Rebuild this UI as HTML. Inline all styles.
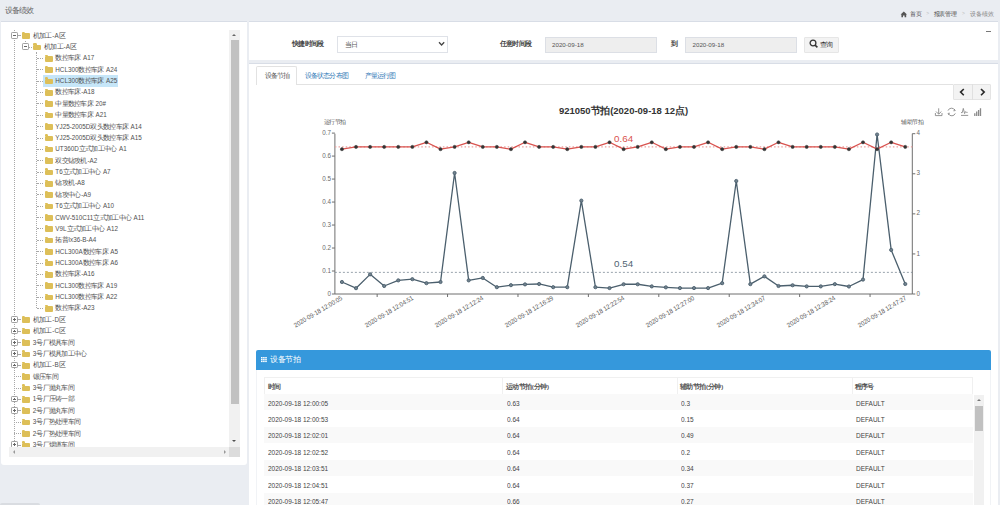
<!DOCTYPE html>
<html><head><meta charset="utf-8"><style>
*{box-sizing:border-box;margin:0;padding:0}
html,body{width:1000px;height:505px;overflow:hidden;background:#eaedf2;font-family:"Liberation Sans",sans-serif;color:#333}
.abs{position:absolute}
.t{position:absolute;white-space:nowrap;line-height:1}

.t.c{text-align:center}
.xl{font-size:6.6px;color:#555;transform-origin:100% 0;transform:rotate(-31deg) scaleX(0.9)}
.panel{position:absolute;background:#fff;border-top:1.5px solid #d8dde6}
.vl{position:absolute;width:0;border-left:1px dotted #a8a8a8}
.hl{position:absolute;height:0;border-top:1px dotted #a8a8a8}
.ex{position:absolute;width:6.6px;height:6.6px;border:1px solid #a0a0a0;border-radius:1.2px;background:#fff}
.ex .h{position:absolute;left:1px;top:1.9px;width:2.6px;height:0.8px;background:#666}
.ex .v{position:absolute;left:1.9px;top:1px;width:0.8px;height:2.6px;background:#666}
.fd{position:absolute;width:8px;height:5.6px;background:#ddbf58;border-radius:1px}
.fd:before{content:"";position:absolute;left:0;top:-1.2px;width:3.4px;height:1.6px;background:#ddbf58;border-radius:1px 1.4px 0 0}
.sel{position:absolute;background:#c6e6f8}
.sb{position:absolute;background:#f1f1f1}
.th{position:absolute;background:#c1c1c1}
.tri{position:absolute;width:0;height:0}
</style></head><body>
<div class="t" style="left:4.9px;top:6.8px;font-size:7px;color:#666"><span style="font-size:8px;letter-spacing:-1.00px;margin-right:1.00px">设备绩效</span></div>
<svg class="abs" style="left:900px;top:10.5px" width="8" height="7"><path d="M0.6 3.4 L3.8 0.6 L7 3.4 L6.2 3.4 L6.2 6.3 L4.6 6.3 L4.6 4.5 L3 4.5 L3 6.3 L1.4 6.3 L1.4 3.4 Z" fill="#555"/></svg>
<div class="t" style="left:910.30px;top:10.80px;font-size:6.00px;color:#444;"><span style="font-size:6px;letter-spacing:-0.30px;margin-right:0.30px">首页</span></div>
<div class="t" style="left:926.30px;top:11.00px;font-size:5.00px;color:#bbb;">&gt;</div>
<div class="t" style="left:933.70px;top:10.80px;font-size:6.00px;color:#444;"><span style="font-size:6px;letter-spacing:-0.30px;margin-right:0.30px">报表管理</span></div>
<div class="t" style="left:962.00px;top:11.00px;font-size:5.00px;color:#bbb;">&gt;</div>
<div class="t" style="left:970.40px;top:10.80px;font-size:6.00px;color:#888;"><span style="font-size:6px;letter-spacing:-0.20px;margin-right:0.20px">设备绩效</span></div>
<div class="panel" style="left:1px;top:20.5px;width:246px;height:444.5px;border-radius:0 0 3px 3px"></div>
<div class="abs" style="left:9px;top:30px;width:220.2px;height:417px;overflow:hidden">
<div class="abs" style="left:-9px;top:-30px;width:260px;height:500px">
<div class="vl" style="left:13.80px;top:29.50px;height:421.02px"></div>
<div class="vl" style="left:25.10px;top:40.57px;height:3.00px"></div>
<div class="vl" style="left:36.40px;top:51.94px;height:256.14px"></div>
<div class="ex" style="left:11.10px;top:32.00px"><i class="h"></i></div>
<div class="hl" style="left:17.60px;top:35.20px;width:2.70px"></div>
<div class="fd" style="left:22.00px;top:33.20px"></div>
<div class="t" style="left:32.70px;top:31.60px;font-size:6.30px;color:#505050;"><span style="font-size:7px;letter-spacing:-0.70px;margin-right:0.70px">机加工</span>-A<span style="font-size:7px;letter-spacing:-0.70px;margin-right:0.70px">区</span></div>
<div class="ex" style="left:22.40px;top:43.37px"><i class="h"></i></div>
<div class="hl" style="left:28.90px;top:46.57px;width:2.70px"></div>
<div class="fd" style="left:33.30px;top:44.57px"></div>
<div class="t" style="left:44.00px;top:42.97px;font-size:6.30px;color:#505050;"><span style="font-size:7px;letter-spacing:-0.70px;margin-right:0.70px">机加工</span>-A<span style="font-size:7px;letter-spacing:-0.70px;margin-right:0.70px">区</span></div>
<div class="hl" style="left:36.90px;top:57.94px;width:6.50px"></div>
<div class="fd" style="left:44.60px;top:55.94px"></div>
<div class="t" style="left:55.30px;top:54.34px;font-size:6.30px;color:#505050;"><span style="font-size:7px;letter-spacing:-0.70px;margin-right:0.70px">数控车床</span> A17</div>
<div class="hl" style="left:36.90px;top:69.31px;width:6.50px"></div>
<div class="fd" style="left:44.60px;top:67.31px"></div>
<div class="t" style="left:55.30px;top:65.71px;font-size:6.30px;color:#505050;">HCL300<span style="font-size:7px;letter-spacing:-0.70px;margin-right:0.70px">数控车床</span> A24</div>
<div class="sel" style="left:43.1px;top:75px;width:74.8px;height:11.7px"></div>
<div class="hl" style="left:36.90px;top:80.68px;width:6.50px"></div>
<div class="fd" style="left:44.60px;top:78.68px"></div>
<div class="t" style="left:55.30px;top:77.08px;font-size:6.30px;color:#505050;">HCL300<span style="font-size:7px;letter-spacing:-0.70px;margin-right:0.70px">数控车床</span> A25</div>
<div class="hl" style="left:36.90px;top:92.05px;width:6.50px"></div>
<div class="fd" style="left:44.60px;top:90.05px"></div>
<div class="t" style="left:55.30px;top:88.45px;font-size:6.30px;color:#505050;"><span style="font-size:7px;letter-spacing:-0.70px;margin-right:0.70px">数控车床</span>-A18</div>
<div class="hl" style="left:36.90px;top:103.42px;width:6.50px"></div>
<div class="fd" style="left:44.60px;top:101.42px"></div>
<div class="t" style="left:55.30px;top:99.82px;font-size:6.30px;color:#505050;"><span style="font-size:7px;letter-spacing:-0.70px;margin-right:0.70px">中量数控车床</span> 20#</div>
<div class="hl" style="left:36.90px;top:114.79px;width:6.50px"></div>
<div class="fd" style="left:44.60px;top:112.79px"></div>
<div class="t" style="left:55.30px;top:111.19px;font-size:6.30px;color:#505050;"><span style="font-size:7px;letter-spacing:-0.70px;margin-right:0.70px">中量数控车床</span> A21</div>
<div class="hl" style="left:36.90px;top:126.16px;width:6.50px"></div>
<div class="fd" style="left:44.60px;top:124.16px"></div>
<div class="t" style="left:55.30px;top:122.56px;font-size:6.30px;color:#505050;">YJ25-2005D<span style="font-size:7px;letter-spacing:-0.70px;margin-right:0.70px">双头数控车床</span> A14</div>
<div class="hl" style="left:36.90px;top:137.53px;width:6.50px"></div>
<div class="fd" style="left:44.60px;top:135.53px"></div>
<div class="t" style="left:55.30px;top:133.93px;font-size:6.30px;color:#505050;">YJ25-2005D<span style="font-size:7px;letter-spacing:-0.70px;margin-right:0.70px">双头数控车床</span> A15</div>
<div class="hl" style="left:36.90px;top:148.90px;width:6.50px"></div>
<div class="fd" style="left:44.60px;top:146.90px"></div>
<div class="t" style="left:55.30px;top:145.30px;font-size:6.30px;color:#505050;">UT360D<span style="font-size:7px;letter-spacing:-0.70px;margin-right:0.70px">立式加工中心</span> A1</div>
<div class="hl" style="left:36.90px;top:160.27px;width:6.50px"></div>
<div class="fd" style="left:44.60px;top:158.27px"></div>
<div class="t" style="left:55.30px;top:156.67px;font-size:6.30px;color:#505050;"><span style="font-size:7px;letter-spacing:-0.70px;margin-right:0.70px">双交钻攻机</span>-A2</div>
<div class="hl" style="left:36.90px;top:171.64px;width:6.50px"></div>
<div class="fd" style="left:44.60px;top:169.64px"></div>
<div class="t" style="left:55.30px;top:168.04px;font-size:6.30px;color:#505050;">T6<span style="font-size:7px;letter-spacing:-0.70px;margin-right:0.70px">立式加工中心</span> A7</div>
<div class="hl" style="left:36.90px;top:183.01px;width:6.50px"></div>
<div class="fd" style="left:44.60px;top:181.01px"></div>
<div class="t" style="left:55.30px;top:179.41px;font-size:6.30px;color:#505050;"><span style="font-size:7px;letter-spacing:-0.70px;margin-right:0.70px">钻攻机</span>-A8</div>
<div class="hl" style="left:36.90px;top:194.38px;width:6.50px"></div>
<div class="fd" style="left:44.60px;top:192.38px"></div>
<div class="t" style="left:55.30px;top:190.78px;font-size:6.30px;color:#505050;"><span style="font-size:7px;letter-spacing:-0.70px;margin-right:0.70px">钻攻中心</span>-A9</div>
<div class="hl" style="left:36.90px;top:205.75px;width:6.50px"></div>
<div class="fd" style="left:44.60px;top:203.75px"></div>
<div class="t" style="left:55.30px;top:202.15px;font-size:6.30px;color:#505050;">T6<span style="font-size:7px;letter-spacing:-0.70px;margin-right:0.70px">立式加工中心</span> A10</div>
<div class="hl" style="left:36.90px;top:217.12px;width:6.50px"></div>
<div class="fd" style="left:44.60px;top:215.12px"></div>
<div class="t" style="left:55.30px;top:213.52px;font-size:6.30px;color:#505050;">CWV-510C11<span style="font-size:7px;letter-spacing:-0.70px;margin-right:0.70px">立式加工中心</span> A11</div>
<div class="hl" style="left:36.90px;top:228.49px;width:6.50px"></div>
<div class="fd" style="left:44.60px;top:226.49px"></div>
<div class="t" style="left:55.30px;top:224.89px;font-size:6.30px;color:#505050;">V9L<span style="font-size:7px;letter-spacing:-0.70px;margin-right:0.70px">立式加工中心</span> A12</div>
<div class="hl" style="left:36.90px;top:239.86px;width:6.50px"></div>
<div class="fd" style="left:44.60px;top:237.86px"></div>
<div class="t" style="left:55.30px;top:236.26px;font-size:6.30px;color:#505050;"><span style="font-size:7px;letter-spacing:-0.70px;margin-right:0.70px">拓普</span>lx36-B-A4</div>
<div class="hl" style="left:36.90px;top:251.23px;width:6.50px"></div>
<div class="fd" style="left:44.60px;top:249.23px"></div>
<div class="t" style="left:55.30px;top:247.63px;font-size:6.30px;color:#505050;">HCL300A<span style="font-size:7px;letter-spacing:-0.70px;margin-right:0.70px">数控车床</span> A5</div>
<div class="hl" style="left:36.90px;top:262.60px;width:6.50px"></div>
<div class="fd" style="left:44.60px;top:260.60px"></div>
<div class="t" style="left:55.30px;top:259.00px;font-size:6.30px;color:#505050;">HCL300A<span style="font-size:7px;letter-spacing:-0.70px;margin-right:0.70px">数控车床</span> A6</div>
<div class="hl" style="left:36.90px;top:273.97px;width:6.50px"></div>
<div class="fd" style="left:44.60px;top:271.97px"></div>
<div class="t" style="left:55.30px;top:270.37px;font-size:6.30px;color:#505050;"><span style="font-size:7px;letter-spacing:-0.70px;margin-right:0.70px">数控车床</span>-A16</div>
<div class="hl" style="left:36.90px;top:285.34px;width:6.50px"></div>
<div class="fd" style="left:44.60px;top:283.34px"></div>
<div class="t" style="left:55.30px;top:281.74px;font-size:6.30px;color:#505050;">HCL300<span style="font-size:7px;letter-spacing:-0.70px;margin-right:0.70px">数控车床</span> A19</div>
<div class="hl" style="left:36.90px;top:296.71px;width:6.50px"></div>
<div class="fd" style="left:44.60px;top:294.71px"></div>
<div class="t" style="left:55.30px;top:293.11px;font-size:6.30px;color:#505050;">HCL300<span style="font-size:7px;letter-spacing:-0.70px;margin-right:0.70px">数控车床</span> A22</div>
<div class="hl" style="left:36.90px;top:308.08px;width:6.50px"></div>
<div class="fd" style="left:44.60px;top:306.08px"></div>
<div class="t" style="left:55.30px;top:304.48px;font-size:6.30px;color:#505050;"><span style="font-size:7px;letter-spacing:-0.70px;margin-right:0.70px">数控车床</span>-A23</div>
<div class="ex" style="left:11.10px;top:316.25px"><i class="h"></i><i class=v></i></div>
<div class="hl" style="left:17.60px;top:319.45px;width:2.70px"></div>
<div class="fd" style="left:22.00px;top:317.45px"></div>
<div class="t" style="left:32.70px;top:315.85px;font-size:6.30px;color:#505050;"><span style="font-size:7px;letter-spacing:-0.70px;margin-right:0.70px">机加工</span>-D<span style="font-size:7px;letter-spacing:-0.70px;margin-right:0.70px">区</span></div>
<div class="ex" style="left:11.10px;top:327.62px"><i class="h"></i><i class=v></i></div>
<div class="hl" style="left:17.60px;top:330.82px;width:2.70px"></div>
<div class="fd" style="left:22.00px;top:328.82px"></div>
<div class="t" style="left:32.70px;top:327.22px;font-size:6.30px;color:#505050;"><span style="font-size:7px;letter-spacing:-0.70px;margin-right:0.70px">机加工</span>-C<span style="font-size:7px;letter-spacing:-0.70px;margin-right:0.70px">区</span></div>
<div class="ex" style="left:11.10px;top:338.99px"><i class="h"></i><i class=v></i></div>
<div class="hl" style="left:17.60px;top:342.19px;width:2.70px"></div>
<div class="fd" style="left:22.00px;top:340.19px"></div>
<div class="t" style="left:32.70px;top:338.59px;font-size:6.30px;color:#505050;">3<span style="font-size:7px;letter-spacing:-0.70px;margin-right:0.70px">号厂模具车间</span></div>
<div class="ex" style="left:11.10px;top:350.36px"><i class="h"></i><i class=v></i></div>
<div class="hl" style="left:17.60px;top:353.56px;width:2.70px"></div>
<div class="fd" style="left:22.00px;top:351.56px"></div>
<div class="t" style="left:32.70px;top:349.96px;font-size:6.30px;color:#505050;">3<span style="font-size:7px;letter-spacing:-0.70px;margin-right:0.70px">号厂模具加工中心</span></div>
<div class="ex" style="left:11.10px;top:361.73px"><i class="h"></i><i class=v></i></div>
<div class="hl" style="left:17.60px;top:364.93px;width:2.70px"></div>
<div class="fd" style="left:22.00px;top:362.93px"></div>
<div class="t" style="left:32.70px;top:361.33px;font-size:6.30px;color:#505050;"><span style="font-size:7px;letter-spacing:-0.70px;margin-right:0.70px">机加工</span>-B<span style="font-size:7px;letter-spacing:-0.70px;margin-right:0.70px">区</span></div>
<div class="hl" style="left:14.30px;top:376.30px;width:6.50px"></div>
<div class="fd" style="left:22.00px;top:374.30px"></div>
<div class="t" style="left:32.70px;top:372.70px;font-size:6.30px;color:#505050;"><span style="font-size:7px;letter-spacing:-0.70px;margin-right:0.70px">锻压车间</span></div>
<div class="hl" style="left:14.30px;top:387.67px;width:6.50px"></div>
<div class="fd" style="left:22.00px;top:385.67px"></div>
<div class="t" style="left:32.70px;top:384.07px;font-size:6.30px;color:#505050;">3<span style="font-size:7px;letter-spacing:-0.70px;margin-right:0.70px">号厂抛丸车间</span></div>
<div class="ex" style="left:11.10px;top:395.84px"><i class="h"></i><i class=v></i></div>
<div class="hl" style="left:17.60px;top:399.04px;width:2.70px"></div>
<div class="fd" style="left:22.00px;top:397.04px"></div>
<div class="t" style="left:32.70px;top:395.44px;font-size:6.30px;color:#505050;">1<span style="font-size:7px;letter-spacing:-0.70px;margin-right:0.70px">号厂压铸一部</span></div>
<div class="ex" style="left:11.10px;top:407.21px"><i class="h"></i><i class=v></i></div>
<div class="hl" style="left:17.60px;top:410.41px;width:2.70px"></div>
<div class="fd" style="left:22.00px;top:408.41px"></div>
<div class="t" style="left:32.70px;top:406.81px;font-size:6.30px;color:#505050;">2<span style="font-size:7px;letter-spacing:-0.70px;margin-right:0.70px">号厂抛丸车间</span></div>
<div class="hl" style="left:14.30px;top:421.78px;width:6.50px"></div>
<div class="fd" style="left:22.00px;top:419.78px"></div>
<div class="t" style="left:32.70px;top:418.18px;font-size:6.30px;color:#505050;">3<span style="font-size:7px;letter-spacing:-0.70px;margin-right:0.70px">号厂热处理车间</span></div>
<div class="hl" style="left:14.30px;top:433.15px;width:6.50px"></div>
<div class="fd" style="left:22.00px;top:431.15px"></div>
<div class="t" style="left:32.70px;top:429.55px;font-size:6.30px;color:#505050;">2<span style="font-size:7px;letter-spacing:-0.70px;margin-right:0.70px">号厂热处理车间</span></div>
<div class="ex" style="left:11.10px;top:441.32px"><i class="h"></i><i class=v></i></div>
<div class="hl" style="left:17.60px;top:444.52px;width:2.70px"></div>
<div class="fd" style="left:22.00px;top:442.52px"></div>
<div class="t" style="left:32.70px;top:440.92px;font-size:6.30px;color:#505050;">3<span style="font-size:7px;letter-spacing:-0.70px;margin-right:0.70px">号厂烟道车间</span></div>
</div></div>
<div class="sb" style="left:229.2px;top:30px;width:10.6px;height:417px"></div>
<div class="th" style="left:230.5px;top:40px;width:8px;height:363.7px"></div>
<div class="tri" style="left:232.4px;top:33.6px;border-left:2.3px solid transparent;border-right:2.3px solid transparent;border-bottom:2.3px solid #666"></div>
<div class="tri" style="left:232.4px;top:440px;border-left:2.3px solid transparent;border-right:2.3px solid transparent;border-top:2.3px solid #505050"></div>
<div class="sb" style="left:9px;top:447px;width:220.2px;height:10.4px"></div>
<div class="sb" style="left:229.2px;top:447px;width:10.6px;height:10.4px;background:#dcdcdc"></div>
<div class="tri" style="left:13px;top:449.9px;border-top:2.2px solid transparent;border-bottom:2.2px solid transparent;border-right:2.2px solid #999"></div>
<div class="tri" style="left:223.5px;top:449.9px;border-top:2.2px solid transparent;border-bottom:2.2px solid transparent;border-left:2.2px solid #999"></div>
<div class="abs" style="left:0;top:503px;width:40px;height:2px;background:#d9dce1;border-radius:2px 2px 0 0"></div>

<div class="panel" style="left:249px;top:20.5px;width:749px;height:39.5px"></div>
<div class="abs" style="left:986px;top:31px;width:5px;height:1px;background:#777"></div>
<div class="t" style="left:292.20px;top:39.50px;font-size:6.20px;color:#444;font-weight:bold"><span style="font-size:7px;letter-spacing:-0.80px;margin-right:0.80px">快捷时间段</span></div>
<div class="abs" style="left:337px;top:36.2px;width:111px;height:16.6px;border:1px solid #dfe2e8;background:#fff"></div>
<div class="t" style="left:345.00px;top:41.30px;font-size:6.00px;color:#555;"><span style="font-size:7px;letter-spacing:-1.00px;margin-right:1.00px">当日</span></div>
<svg class="abs" style="left:438px;top:41px" width="8" height="6"><path d="M1 1.3 L3.6 4 L6.2 1.3" fill="none" stroke="#444" stroke-width="1.3"/></svg>
<div class="t" style="left:500.00px;top:39.50px;font-size:6.20px;color:#444;font-weight:bold"><span style="font-size:7px;letter-spacing:-0.80px;margin-right:0.80px">任意时间段</span></div>
<div class="abs" style="left:545.4px;top:36.6px;width:111.6px;height:16px;border:1px solid #dcdfe5;background:#eeeeee"></div>
<div class="t" style="left:552.00px;top:41.60px;font-size:6.20px;color:#555;">2020-09-18</div>
<div class="t" style="left:671.00px;top:39.50px;font-size:6.20px;color:#444;font-weight:bold"><span style="font-size:7px;letter-spacing:-0.80px;margin-right:0.80px">到</span></div>
<div class="abs" style="left:685.4px;top:36.6px;width:111.6px;height:16.2px;border:1px solid #dcdfe5;background:#eeeeee"></div>
<div class="t" style="left:692.50px;top:41.60px;font-size:6.20px;color:#555;">2020-09-18</div>
<div class="abs" style="left:804px;top:37px;width:34.7px;height:15.6px;border:1px solid #e6e6e6;background:#f3f3f3;border-radius:1px"></div>
<svg class="abs" style="left:809px;top:39px" width="10" height="10"><circle cx="4" cy="4" r="2.9" fill="none" stroke="#333" stroke-width="1.3"/><path d="M6.1 6.1 L8.4 8.4" stroke="#333" stroke-width="1.5"/></svg>
<div class="t" style="left:820.00px;top:41.20px;font-size:6.30px;color:#333;"><span style="font-size:7px;letter-spacing:-0.70px;margin-right:0.70px">查询</span></div>

<div class="panel" style="left:249px;top:62.5px;width:749px;height:443px"></div>
<div class="abs" style="left:256px;top:83.6px;width:697px;height:1px;background:#e2e2e2"></div>
<div class="abs" style="left:256.4px;top:65.7px;width:40.4px;height:19px;border:1px solid #e2e2e2;border-bottom:0;background:#fff;border-radius:2px 2px 0 0"></div>
<div class="t" style="left:265.00px;top:72.20px;font-size:6.10px;color:#555;"><span style="font-size:7px;letter-spacing:-0.90px;margin-right:0.90px">设备节拍</span></div>
<div class="t" style="left:305.00px;top:72.20px;font-size:6.10px;color:#337ab7;"><span style="font-size:7px;letter-spacing:-0.90px;margin-right:0.90px">设备状态分布图</span></div>
<div class="t" style="left:365.00px;top:72.20px;font-size:6.10px;color:#337ab7;"><span style="font-size:7px;letter-spacing:-0.90px;margin-right:0.90px">产量运行图</span></div>
<div class="abs" style="left:953.2px;top:84.4px;width:37.4px;height:16px;border:1px solid #e4e4e4;background:#f3f3f3;border-radius:1px"></div>
<div class="abs" style="left:971.7px;top:84.4px;width:1px;height:16px;background:#e0e0e0"></div>
<svg class="abs" style="left:955px;top:86px" width="36" height="12"><path d="M8.8 3 L5.6 6.1 L8.8 9.2" fill="none" stroke="#2a2a2a" stroke-width="1.6"/><path d="M26 3 L29.2 6.1 L26 9.2" fill="none" stroke="#2a2a2a" stroke-width="1.6"/></svg>

<svg class="abs" style="left:0;top:0" width="1000" height="505">
<line x1="334.9" y1="133.7" x2="334.9" y2="294.0" stroke="#6e6e6e" stroke-width="1"/>
<line x1="912.3" y1="133.7" x2="912.3" y2="294.0" stroke="#6e6e6e" stroke-width="1"/>
<line x1="334.9" y1="294.0" x2="912.3" y2="294.0" stroke="#6e6e6e" stroke-width="1"/>
<line x1="331.9" y1="294.00" x2="334.9" y2="294.00" stroke="#6e6e6e"/>
<line x1="331.9" y1="271.01" x2="334.9" y2="271.01" stroke="#6e6e6e"/>
<line x1="331.9" y1="248.03" x2="334.9" y2="248.03" stroke="#6e6e6e"/>
<line x1="331.9" y1="225.04" x2="334.9" y2="225.04" stroke="#6e6e6e"/>
<line x1="331.9" y1="202.06" x2="334.9" y2="202.06" stroke="#6e6e6e"/>
<line x1="331.9" y1="179.07" x2="334.9" y2="179.07" stroke="#6e6e6e"/>
<line x1="331.9" y1="156.09" x2="334.9" y2="156.09" stroke="#6e6e6e"/>
<line x1="331.9" y1="133.10" x2="334.9" y2="133.10" stroke="#6e6e6e"/>
<line x1="912.3" y1="294.00" x2="915.3" y2="294.00" stroke="#6e6e6e"/>
<line x1="912.3" y1="253.93" x2="915.3" y2="253.93" stroke="#6e6e6e"/>
<line x1="912.3" y1="213.85" x2="915.3" y2="213.85" stroke="#6e6e6e"/>
<line x1="912.3" y1="173.77" x2="915.3" y2="173.77" stroke="#6e6e6e"/>
<line x1="912.3" y1="133.70" x2="915.3" y2="133.70" stroke="#6e6e6e"/>
<line x1="377.15" y1="294.0" x2="377.15" y2="297.0" stroke="#6e6e6e"/>
<line x1="447.56" y1="294.0" x2="447.56" y2="297.0" stroke="#6e6e6e"/>
<line x1="517.98" y1="294.0" x2="517.98" y2="297.0" stroke="#6e6e6e"/>
<line x1="588.39" y1="294.0" x2="588.39" y2="297.0" stroke="#6e6e6e"/>
<line x1="658.81" y1="294.0" x2="658.81" y2="297.0" stroke="#6e6e6e"/>
<line x1="729.22" y1="294.0" x2="729.22" y2="297.0" stroke="#6e6e6e"/>
<line x1="799.64" y1="294.0" x2="799.64" y2="297.0" stroke="#6e6e6e"/>
<line x1="870.05" y1="294.0" x2="870.05" y2="297.0" stroke="#6e6e6e"/>
<line x1="334.9" y1="146.89" x2="912.3" y2="146.89" stroke="#eba3a1" stroke-width="1.3" stroke-dasharray="1.5 2.1"/>
<line x1="334.9" y1="272.36" x2="912.3" y2="272.36" stroke="#7d8c97" stroke-width="0.8" stroke-dasharray="2 2"/>
<polyline points="341.94,281.98 356.02,288.19 370.11,274.36 384.19,285.99 398.27,280.37 412.36,279.17 426.44,283.18 440.52,281.98 454.60,172.97 468.69,280.37 482.77,277.97 496.85,287.19 510.94,285.18 525.02,284.38 539.10,283.98 553.19,287.19 567.27,287.19 581.35,200.63 595.43,287.19 609.52,288.07 623.60,284.26 637.68,284.26 651.77,286.39 665.85,287.35 679.93,288.07 694.01,288.07 708.10,288.07 722.18,283.18 736.26,180.99 750.35,284.14 764.43,276.37 778.51,285.99 792.60,285.26 806.68,286.39 820.76,286.39 834.84,284.14 848.93,286.51 863.01,279.57 877.09,134.50 891.18,249.92 905.26,283.98" fill="none" stroke="#4b5f6d" stroke-width="1.3" stroke-linejoin="round"/>
<circle cx="341.94" cy="281.98" r="1.6" fill="#71828e" stroke="#4b5f6d" stroke-width="0.9"/>
<circle cx="356.02" cy="288.19" r="1.6" fill="#71828e" stroke="#4b5f6d" stroke-width="0.9"/>
<circle cx="370.11" cy="274.36" r="1.6" fill="#71828e" stroke="#4b5f6d" stroke-width="0.9"/>
<circle cx="384.19" cy="285.99" r="1.6" fill="#71828e" stroke="#4b5f6d" stroke-width="0.9"/>
<circle cx="398.27" cy="280.37" r="1.6" fill="#71828e" stroke="#4b5f6d" stroke-width="0.9"/>
<circle cx="412.36" cy="279.17" r="1.6" fill="#71828e" stroke="#4b5f6d" stroke-width="0.9"/>
<circle cx="426.44" cy="283.18" r="1.6" fill="#71828e" stroke="#4b5f6d" stroke-width="0.9"/>
<circle cx="440.52" cy="281.98" r="1.6" fill="#71828e" stroke="#4b5f6d" stroke-width="0.9"/>
<circle cx="454.60" cy="172.97" r="1.6" fill="#71828e" stroke="#4b5f6d" stroke-width="0.9"/>
<circle cx="468.69" cy="280.37" r="1.6" fill="#71828e" stroke="#4b5f6d" stroke-width="0.9"/>
<circle cx="482.77" cy="277.97" r="1.6" fill="#71828e" stroke="#4b5f6d" stroke-width="0.9"/>
<circle cx="496.85" cy="287.19" r="1.6" fill="#71828e" stroke="#4b5f6d" stroke-width="0.9"/>
<circle cx="510.94" cy="285.18" r="1.6" fill="#71828e" stroke="#4b5f6d" stroke-width="0.9"/>
<circle cx="525.02" cy="284.38" r="1.6" fill="#71828e" stroke="#4b5f6d" stroke-width="0.9"/>
<circle cx="539.10" cy="283.98" r="1.6" fill="#71828e" stroke="#4b5f6d" stroke-width="0.9"/>
<circle cx="553.19" cy="287.19" r="1.6" fill="#71828e" stroke="#4b5f6d" stroke-width="0.9"/>
<circle cx="567.27" cy="287.19" r="1.6" fill="#71828e" stroke="#4b5f6d" stroke-width="0.9"/>
<circle cx="581.35" cy="200.63" r="1.6" fill="#71828e" stroke="#4b5f6d" stroke-width="0.9"/>
<circle cx="595.43" cy="287.19" r="1.6" fill="#71828e" stroke="#4b5f6d" stroke-width="0.9"/>
<circle cx="609.52" cy="288.07" r="1.6" fill="#71828e" stroke="#4b5f6d" stroke-width="0.9"/>
<circle cx="623.60" cy="284.26" r="1.6" fill="#71828e" stroke="#4b5f6d" stroke-width="0.9"/>
<circle cx="637.68" cy="284.26" r="1.6" fill="#71828e" stroke="#4b5f6d" stroke-width="0.9"/>
<circle cx="651.77" cy="286.39" r="1.6" fill="#71828e" stroke="#4b5f6d" stroke-width="0.9"/>
<circle cx="665.85" cy="287.35" r="1.6" fill="#71828e" stroke="#4b5f6d" stroke-width="0.9"/>
<circle cx="679.93" cy="288.07" r="1.6" fill="#71828e" stroke="#4b5f6d" stroke-width="0.9"/>
<circle cx="694.01" cy="288.07" r="1.6" fill="#71828e" stroke="#4b5f6d" stroke-width="0.9"/>
<circle cx="708.10" cy="288.07" r="1.6" fill="#71828e" stroke="#4b5f6d" stroke-width="0.9"/>
<circle cx="722.18" cy="283.18" r="1.6" fill="#71828e" stroke="#4b5f6d" stroke-width="0.9"/>
<circle cx="736.26" cy="180.99" r="1.6" fill="#71828e" stroke="#4b5f6d" stroke-width="0.9"/>
<circle cx="750.35" cy="284.14" r="1.6" fill="#71828e" stroke="#4b5f6d" stroke-width="0.9"/>
<circle cx="764.43" cy="276.37" r="1.6" fill="#71828e" stroke="#4b5f6d" stroke-width="0.9"/>
<circle cx="778.51" cy="285.99" r="1.6" fill="#71828e" stroke="#4b5f6d" stroke-width="0.9"/>
<circle cx="792.60" cy="285.26" r="1.6" fill="#71828e" stroke="#4b5f6d" stroke-width="0.9"/>
<circle cx="806.68" cy="286.39" r="1.6" fill="#71828e" stroke="#4b5f6d" stroke-width="0.9"/>
<circle cx="820.76" cy="286.39" r="1.6" fill="#71828e" stroke="#4b5f6d" stroke-width="0.9"/>
<circle cx="834.84" cy="284.14" r="1.6" fill="#71828e" stroke="#4b5f6d" stroke-width="0.9"/>
<circle cx="848.93" cy="286.51" r="1.6" fill="#71828e" stroke="#4b5f6d" stroke-width="0.9"/>
<circle cx="863.01" cy="279.57" r="1.6" fill="#71828e" stroke="#4b5f6d" stroke-width="0.9"/>
<circle cx="877.09" cy="134.50" r="1.6" fill="#71828e" stroke="#4b5f6d" stroke-width="0.9"/>
<circle cx="891.18" cy="249.92" r="1.6" fill="#71828e" stroke="#4b5f6d" stroke-width="0.9"/>
<circle cx="905.26" cy="283.98" r="1.6" fill="#71828e" stroke="#4b5f6d" stroke-width="0.9"/>
<polyline points="341.94,149.19 356.02,146.89 370.11,146.89 384.19,146.89 398.27,146.89 412.36,146.89 426.44,142.29 440.52,149.19 454.60,146.89 468.69,142.29 482.77,146.89 496.85,146.89 510.94,149.19 525.02,142.29 539.10,146.89 553.19,146.89 567.27,149.19 581.35,146.89 595.43,146.89 609.52,142.29 623.60,149.19 637.68,146.89 651.77,142.29 665.85,149.19 679.93,146.89 694.01,146.89 708.10,142.29 722.18,149.19 736.26,146.89 750.35,146.89 764.43,149.19 778.51,142.29 792.60,146.89 806.68,146.89 820.76,146.89 834.84,146.89 848.93,149.19 863.01,142.29 877.09,149.19 891.18,142.29 905.26,146.89" fill="none" stroke="#d9534f" stroke-width="1.3" stroke-linejoin="round"/>
<circle cx="341.94" cy="149.19" r="1.6" fill="#333" stroke="#3a3a3a" stroke-width="0.5"/>
<circle cx="356.02" cy="146.89" r="1.6" fill="#333" stroke="#3a3a3a" stroke-width="0.5"/>
<circle cx="370.11" cy="146.89" r="1.6" fill="#333" stroke="#3a3a3a" stroke-width="0.5"/>
<circle cx="384.19" cy="146.89" r="1.6" fill="#333" stroke="#3a3a3a" stroke-width="0.5"/>
<circle cx="398.27" cy="146.89" r="1.6" fill="#333" stroke="#3a3a3a" stroke-width="0.5"/>
<circle cx="412.36" cy="146.89" r="1.6" fill="#333" stroke="#3a3a3a" stroke-width="0.5"/>
<circle cx="426.44" cy="142.29" r="1.6" fill="#333" stroke="#3a3a3a" stroke-width="0.5"/>
<circle cx="440.52" cy="149.19" r="1.6" fill="#333" stroke="#3a3a3a" stroke-width="0.5"/>
<circle cx="454.60" cy="146.89" r="1.6" fill="#333" stroke="#3a3a3a" stroke-width="0.5"/>
<circle cx="468.69" cy="142.29" r="1.6" fill="#333" stroke="#3a3a3a" stroke-width="0.5"/>
<circle cx="482.77" cy="146.89" r="1.6" fill="#333" stroke="#3a3a3a" stroke-width="0.5"/>
<circle cx="496.85" cy="146.89" r="1.6" fill="#333" stroke="#3a3a3a" stroke-width="0.5"/>
<circle cx="510.94" cy="149.19" r="1.6" fill="#333" stroke="#3a3a3a" stroke-width="0.5"/>
<circle cx="525.02" cy="142.29" r="1.6" fill="#333" stroke="#3a3a3a" stroke-width="0.5"/>
<circle cx="539.10" cy="146.89" r="1.6" fill="#333" stroke="#3a3a3a" stroke-width="0.5"/>
<circle cx="553.19" cy="146.89" r="1.6" fill="#333" stroke="#3a3a3a" stroke-width="0.5"/>
<circle cx="567.27" cy="149.19" r="1.6" fill="#333" stroke="#3a3a3a" stroke-width="0.5"/>
<circle cx="581.35" cy="146.89" r="1.6" fill="#333" stroke="#3a3a3a" stroke-width="0.5"/>
<circle cx="595.43" cy="146.89" r="1.6" fill="#333" stroke="#3a3a3a" stroke-width="0.5"/>
<circle cx="609.52" cy="142.29" r="1.6" fill="#333" stroke="#3a3a3a" stroke-width="0.5"/>
<circle cx="623.60" cy="149.19" r="1.6" fill="#333" stroke="#3a3a3a" stroke-width="0.5"/>
<circle cx="637.68" cy="146.89" r="1.6" fill="#333" stroke="#3a3a3a" stroke-width="0.5"/>
<circle cx="651.77" cy="142.29" r="1.6" fill="#333" stroke="#3a3a3a" stroke-width="0.5"/>
<circle cx="665.85" cy="149.19" r="1.6" fill="#333" stroke="#3a3a3a" stroke-width="0.5"/>
<circle cx="679.93" cy="146.89" r="1.6" fill="#333" stroke="#3a3a3a" stroke-width="0.5"/>
<circle cx="694.01" cy="146.89" r="1.6" fill="#333" stroke="#3a3a3a" stroke-width="0.5"/>
<circle cx="708.10" cy="142.29" r="1.6" fill="#333" stroke="#3a3a3a" stroke-width="0.5"/>
<circle cx="722.18" cy="149.19" r="1.6" fill="#333" stroke="#3a3a3a" stroke-width="0.5"/>
<circle cx="736.26" cy="146.89" r="1.6" fill="#333" stroke="#3a3a3a" stroke-width="0.5"/>
<circle cx="750.35" cy="146.89" r="1.6" fill="#333" stroke="#3a3a3a" stroke-width="0.5"/>
<circle cx="764.43" cy="149.19" r="1.6" fill="#333" stroke="#3a3a3a" stroke-width="0.5"/>
<circle cx="778.51" cy="142.29" r="1.6" fill="#333" stroke="#3a3a3a" stroke-width="0.5"/>
<circle cx="792.60" cy="146.89" r="1.6" fill="#333" stroke="#3a3a3a" stroke-width="0.5"/>
<circle cx="806.68" cy="146.89" r="1.6" fill="#333" stroke="#3a3a3a" stroke-width="0.5"/>
<circle cx="820.76" cy="146.89" r="1.6" fill="#333" stroke="#3a3a3a" stroke-width="0.5"/>
<circle cx="834.84" cy="146.89" r="1.6" fill="#333" stroke="#3a3a3a" stroke-width="0.5"/>
<circle cx="848.93" cy="149.19" r="1.6" fill="#333" stroke="#3a3a3a" stroke-width="0.5"/>
<circle cx="863.01" cy="142.29" r="1.6" fill="#333" stroke="#3a3a3a" stroke-width="0.5"/>
<circle cx="877.09" cy="149.19" r="1.6" fill="#333" stroke="#3a3a3a" stroke-width="0.5"/>
<circle cx="891.18" cy="142.29" r="1.6" fill="#333" stroke="#3a3a3a" stroke-width="0.5"/>
<circle cx="905.26" cy="146.89" r="1.6" fill="#333" stroke="#3a3a3a" stroke-width="0.5"/>
<g fill="none" stroke="#8a8a8a" stroke-width="0.9"><path d="M938.7 108.3 V114 M936 111.5 L938.7 114.2 L941.4 111.5 M935.4 113 V115.6 H942 V113"/><path d="M954.9 110.2 A3.8 3.8 0 0 0 948 110.6 M948.4 113.8 A3.8 3.8 0 0 0 955.3 113.4"/><path d="M954.2 109 L955.2 110.6 L953.4 110.8 M949 115 L948.1 113.4 L949.9 113.2"/><path d="M961 112.6 L962.3 112.6 L963.3 108.4 L964.6 113.6 L965.6 111.6 L966.6 112.4 L967.6 112.4 M961 115.4 H968.2"/><path d="M974.8 116 V113.2 M976.7 116 V111.6 M978.6 116 V110 M980.5 116 V108.2" stroke-width="1.3"/></g>
</svg>
<div class="t r" style="right:669.10px;top:290.60px;font-size:6.3px;color:#6a6a6a">0</div>
<div class="t r" style="right:669.10px;top:267.61px;font-size:6.3px;color:#6a6a6a">0.1</div>
<div class="t r" style="right:669.10px;top:244.63px;font-size:6.3px;color:#6a6a6a">0.2</div>
<div class="t r" style="right:669.10px;top:221.64px;font-size:6.3px;color:#6a6a6a">0.3</div>
<div class="t r" style="right:669.10px;top:198.66px;font-size:6.3px;color:#6a6a6a">0.4</div>
<div class="t r" style="right:669.10px;top:175.67px;font-size:6.3px;color:#6a6a6a">0.5</div>
<div class="t r" style="right:669.10px;top:152.69px;font-size:6.3px;color:#6a6a6a">0.6</div>
<div class="t r" style="right:669.10px;top:129.70px;font-size:6.3px;color:#6a6a6a">0.7</div>
<div class="t" style="left:916.50px;top:290.60px;font-size:6.30px;color:#6a6a6a;">0</div>
<div class="t" style="left:916.50px;top:250.53px;font-size:6.30px;color:#6a6a6a;">1</div>
<div class="t" style="left:916.50px;top:210.45px;font-size:6.30px;color:#6a6a6a;">2</div>
<div class="t" style="left:916.50px;top:170.37px;font-size:6.30px;color:#6a6a6a;">3</div>
<div class="t" style="left:916.50px;top:130.30px;font-size:6.30px;color:#6a6a6a;">4</div>
<div class="t xl" style="right:659.56px;top:295.00px">2020-09-18 12:00:05</div>
<div class="t xl" style="right:589.14px;top:295.00px">2020-09-18 12:04:51</div>
<div class="t xl" style="right:518.73px;top:295.00px">2020-09-18 12:12:24</div>
<div class="t xl" style="right:448.31px;top:295.00px">2020-09-18 12:16:39</div>
<div class="t xl" style="right:377.90px;top:295.00px">2020-09-18 12:22:54</div>
<div class="t xl" style="right:307.49px;top:295.00px">2020-09-18 12:27:00</div>
<div class="t xl" style="right:237.07px;top:295.00px">2020-09-18 12:34:07</div>
<div class="t xl" style="right:166.66px;top:295.00px">2020-09-18 12:38:24</div>
<div class="t xl" style="right:96.24px;top:295.00px">2020-09-18 12:47:27</div>
<div class="t" style="left:323.50px;top:118.80px;font-size:6.00px;color:#555;"><span style="font-size:6px;letter-spacing:-0.40px;margin-right:0.40px">运行节拍</span></div>
<div class="t" style="left:901.00px;top:118.80px;font-size:6.00px;color:#555;"><span style="font-size:6px;letter-spacing:-0.40px;margin-right:0.40px">辅助节拍</span></div>
<div class="t c" style="left:583.6px;width:80px;top:133.69px;font-size:9.8px;color:#d9534f">0.64</div>
<div class="t c" style="left:583.6px;width:80px;top:259.16px;font-size:9.8px;color:#4f6371">0.54</div>
<div class="t c" style="left:523.6px;width:200px;top:105.6px;font-size:9.5px;color:#333;font-weight:bold">921050<span style="font-size:10px;letter-spacing:-0.50px;margin-right:0.50px">节拍</span>(2020-09-18 12<span style="font-size:10px;letter-spacing:-0.50px;margin-right:0.50px">点</span>)</div>

<div class="abs" style="left:256px;top:350px;width:735px;height:19.8px;background:#3598dc;border-radius:2px 2px 0 0"></div>
<svg class="abs" style="left:261px;top:357.3px" width="7" height="6"><rect x="0.0" y="0.00" width="1.6" height="1.4" fill="#fff"/><rect x="2.1" y="0.00" width="1.6" height="1.4" fill="#fff"/><rect x="4.2" y="0.00" width="1.6" height="1.4" fill="#fff"/><rect x="0.0" y="1.85" width="1.6" height="1.4" fill="#fff"/><rect x="2.1" y="1.85" width="1.6" height="1.4" fill="#fff"/><rect x="4.2" y="1.85" width="1.6" height="1.4" fill="#fff"/><rect x="0.0" y="3.70" width="1.6" height="1.4" fill="#fff"/><rect x="2.1" y="3.70" width="1.6" height="1.4" fill="#fff"/><rect x="4.2" y="3.70" width="1.6" height="1.4" fill="#fff"/></svg>

<div class="t" style="left:270px;top:356.4px;font-size:7.5px;color:#fff"><span style="font-size:8px;letter-spacing:-0.50px;margin-right:0.50px">设备节拍</span></div>
<div class="abs" style="left:256px;top:369.8px;width:735px;height:136px;border:1px solid #f1f3f6;border-top:0"></div>
<div class="abs" style="left:264.4px;top:377px;width:709px;height:17px;border:1px solid #f0f0f0;border-bottom:0"></div>
<div class="abs" style="left:502.4px;top:377px;width:1px;height:17px;background:#f0f0f0"></div>
<div class="abs" style="left:677px;top:377px;width:1px;height:17px;background:#f0f0f0"></div>
<div class="abs" style="left:851.6px;top:377px;width:1px;height:17px;background:#f0f0f0"></div>
<div class="t" style="left:267.60px;top:382.60px;font-size:6.20px;color:#555;font-weight:bold"><span style="font-size:7px;letter-spacing:-0.80px;margin-right:0.80px">时间</span></div>
<div class="t" style="left:506.20px;top:382.60px;font-size:6.20px;color:#555;font-weight:bold"><span style="font-size:7px;letter-spacing:-0.80px;margin-right:0.80px">运动节拍</span>(<span style="font-size:7px;letter-spacing:-0.80px;margin-right:0.80px">分钟</span>)</div>
<div class="t" style="left:680.30px;top:382.60px;font-size:6.20px;color:#555;font-weight:bold"><span style="font-size:7px;letter-spacing:-0.80px;margin-right:0.80px">辅助节拍</span>(<span style="font-size:7px;letter-spacing:-0.80px;margin-right:0.80px">分钟</span>)</div>
<div class="t" style="left:855.00px;top:382.60px;font-size:6.20px;color:#555;font-weight:bold"><span style="font-size:7px;letter-spacing:-0.80px;margin-right:0.80px">程序号</span></div>
<div class="abs" style="left:264.4px;top:393.90px;width:709px;height:16.55px;background:#f9f9f9"></div>
<div class="t" style="left:268.20px;top:399.50px;font-size:7.00px;color:#444;transform:scaleX(0.925);transform-origin:0 0">2020-09-18 12:00:05</div>
<div class="t" style="left:507.00px;top:399.50px;font-size:7.00px;color:#444;transform:scaleX(0.925);transform-origin:0 0">0.63</div>
<div class="t" style="left:681.00px;top:399.50px;font-size:7.00px;color:#444;transform:scaleX(0.925);transform-origin:0 0">0.3</div>
<div class="t" style="left:855.70px;top:399.50px;font-size:7.00px;color:#444;transform:scaleX(0.925);transform-origin:0 0">DEFAULT</div>
<div class="abs" style="left:264.4px;top:410.35px;width:709px;height:16.55px;background:#fff"></div>
<div class="t" style="left:268.20px;top:415.95px;font-size:7.00px;color:#444;transform:scaleX(0.925);transform-origin:0 0">2020-09-18 12:00:53</div>
<div class="t" style="left:507.00px;top:415.95px;font-size:7.00px;color:#444;transform:scaleX(0.925);transform-origin:0 0">0.64</div>
<div class="t" style="left:681.00px;top:415.95px;font-size:7.00px;color:#444;transform:scaleX(0.925);transform-origin:0 0">0.15</div>
<div class="t" style="left:855.70px;top:415.95px;font-size:7.00px;color:#444;transform:scaleX(0.925);transform-origin:0 0">DEFAULT</div>
<div class="abs" style="left:264.4px;top:426.80px;width:709px;height:16.55px;background:#f9f9f9"></div>
<div class="t" style="left:268.20px;top:432.40px;font-size:7.00px;color:#444;transform:scaleX(0.925);transform-origin:0 0">2020-09-18 12:02:01</div>
<div class="t" style="left:507.00px;top:432.40px;font-size:7.00px;color:#444;transform:scaleX(0.925);transform-origin:0 0">0.64</div>
<div class="t" style="left:681.00px;top:432.40px;font-size:7.00px;color:#444;transform:scaleX(0.925);transform-origin:0 0">0.49</div>
<div class="t" style="left:855.70px;top:432.40px;font-size:7.00px;color:#444;transform:scaleX(0.925);transform-origin:0 0">DEFAULT</div>
<div class="abs" style="left:264.4px;top:443.25px;width:709px;height:16.55px;background:#fff"></div>
<div class="t" style="left:268.20px;top:448.85px;font-size:7.00px;color:#444;transform:scaleX(0.925);transform-origin:0 0">2020-09-18 12:02:52</div>
<div class="t" style="left:507.00px;top:448.85px;font-size:7.00px;color:#444;transform:scaleX(0.925);transform-origin:0 0">0.64</div>
<div class="t" style="left:681.00px;top:448.85px;font-size:7.00px;color:#444;transform:scaleX(0.925);transform-origin:0 0">0.2</div>
<div class="t" style="left:855.70px;top:448.85px;font-size:7.00px;color:#444;transform:scaleX(0.925);transform-origin:0 0">DEFAULT</div>
<div class="abs" style="left:264.4px;top:459.70px;width:709px;height:16.55px;background:#f9f9f9"></div>
<div class="t" style="left:268.20px;top:465.30px;font-size:7.00px;color:#444;transform:scaleX(0.925);transform-origin:0 0">2020-09-18 12:03:51</div>
<div class="t" style="left:507.00px;top:465.30px;font-size:7.00px;color:#444;transform:scaleX(0.925);transform-origin:0 0">0.64</div>
<div class="t" style="left:681.00px;top:465.30px;font-size:7.00px;color:#444;transform:scaleX(0.925);transform-origin:0 0">0.34</div>
<div class="t" style="left:855.70px;top:465.30px;font-size:7.00px;color:#444;transform:scaleX(0.925);transform-origin:0 0">DEFAULT</div>
<div class="abs" style="left:264.4px;top:476.15px;width:709px;height:16.55px;background:#fff"></div>
<div class="t" style="left:268.20px;top:481.75px;font-size:7.00px;color:#444;transform:scaleX(0.925);transform-origin:0 0">2020-09-18 12:04:51</div>
<div class="t" style="left:507.00px;top:481.75px;font-size:7.00px;color:#444;transform:scaleX(0.925);transform-origin:0 0">0.64</div>
<div class="t" style="left:681.00px;top:481.75px;font-size:7.00px;color:#444;transform:scaleX(0.925);transform-origin:0 0">0.37</div>
<div class="t" style="left:855.70px;top:481.75px;font-size:7.00px;color:#444;transform:scaleX(0.925);transform-origin:0 0">DEFAULT</div>
<div class="abs" style="left:264.4px;top:492.60px;width:709px;height:16.55px;background:#f9f9f9"></div>
<div class="t" style="left:268.20px;top:498.20px;font-size:7.00px;color:#444;transform:scaleX(0.925);transform-origin:0 0">2020-09-18 12:05:47</div>
<div class="t" style="left:507.00px;top:498.20px;font-size:7.00px;color:#444;transform:scaleX(0.925);transform-origin:0 0">0.66</div>
<div class="t" style="left:681.00px;top:498.20px;font-size:7.00px;color:#444;transform:scaleX(0.925);transform-origin:0 0">0.27</div>
<div class="t" style="left:855.70px;top:498.20px;font-size:7.00px;color:#444;transform:scaleX(0.925);transform-origin:0 0">DEFAULT</div>
<div class="sb" style="left:973.5px;top:395px;width:10.5px;height:110px"></div>
<div class="th" style="left:975px;top:406px;width:8px;height:25px"></div>
<div class="tri" style="left:976.6px;top:399.2px;border-left:2.2px solid transparent;border-right:2.2px solid transparent;border-bottom:2.2px solid #777"></div>
<div class="abs" style="left:998px;top:20px;width:2px;height:485px;background:#eaedf2"></div>
</body></html>
